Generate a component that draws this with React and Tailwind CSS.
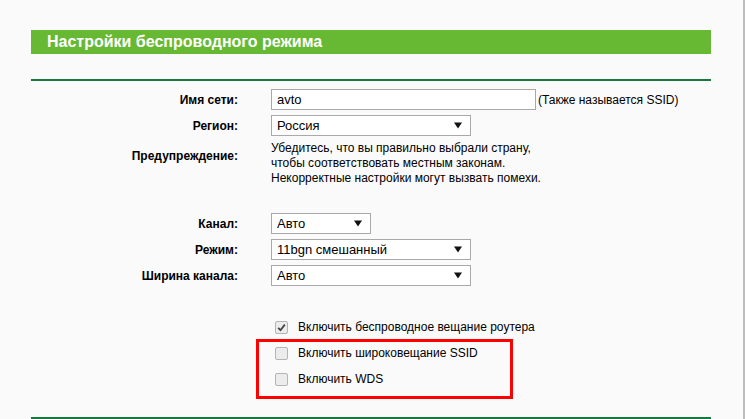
import React from 'react'

const Arrow = () => (
  <svg width="8" height="7" viewBox="0 0 8 7" className="shrink-0">
    <path d="M0 0.5 L8 0.5 L4 6.5 Z" fill="#111" />
  </svg>
)

const Select = ({ value, width }) => (
  <div className={`${width} h-[21px] border border-[#a9a9a9] bg-white flex items-center justify-between pl-[5px] pr-[8px] text-[13px] text-black`}>
    <span>{value}</span>
    <Arrow />
  </div>
)

const Checkbox = ({ checked }) => (
  <div className="w-[13px] h-[13px] rounded-[2px] border border-[#b4b4b4] bg-[#ececec] flex items-center justify-center shrink-0">
    {checked && (
      <svg width="9" height="9" viewBox="0 0 9 9">
        <path d="M1.2 4.8 L3.5 7.2 L7.8 1.6" stroke="#444" strokeWidth="1.8" fill="none" />
      </svg>
    )}
  </div>
)

const CheckRow = ({ checked, label }) => (
  <div className="h-[22px] flex items-center gap-[10px] text-[12px] text-black whitespace-nowrap">
    <Checkbox checked={checked} />
    <span>{label}</span>
  </div>
)

const Label = ({ children, className = '' }) => (
  <div className={`text-right text-[12px] font-bold text-black ${className}`}>{children}</div>
)

export default function App() {
  return (
    <div className="w-[745px] h-[419px] bg-[#fafafa] flex overflow-hidden font-['Liberation_Sans',Arial,sans-serif]">
      <div className="flex-1 pt-[30px] pl-[31px]">
        <div className="w-[680px]">
          <div className="h-[24px] bg-[#67b832] flex items-center pl-[16px] text-white text-[16px] font-bold">
            Настройки беспроводного режима
          </div>
          <div className="mt-[25px] h-[2px] bg-[#177a3c]" />

          <div className="mt-[8px] grid grid-cols-[207px_1fr] gap-x-[33px]">
            <Label className="self-center">Имя сети:</Label>
            <div className="flex items-center gap-[2px]">
              <div className="w-[265px] h-[21px] border border-[#a9a9a9] bg-white flex items-center pl-[5px] text-[13px] text-black">
                avto
              </div>
              <span className="text-[12px] text-black">(Также называется SSID)</span>
            </div>

            <Label className="self-center mt-[5px]">Регион:</Label>
            <div className="mt-[5px]">
              <Select value="Россия" width="w-[200px]" />
            </div>

            <Label className="mt-[13px] leading-[15px]">Предупреждение:</Label>
            <div className="mt-[5px] text-[12px] leading-[15px] text-black">
              Убедитесь, что вы правильно выбрали страну,
              <br />
              чтобы соответствовать местным законам.
              <br />
              Некорректные настройки могут вызвать помехи.
            </div>

            <Label className="self-center mt-[27px]">Канал:</Label>
            <div className="mt-[27px]">
              <Select value="Авто" width="w-[100px]" />
            </div>

            <Label className="self-center mt-[5px]">Режим:</Label>
            <div className="mt-[5px]">
              <Select value="11bgn смешанный" width="w-[200px]" />
            </div>

            <Label className="self-center mt-[5px]">Ширина канала:</Label>
            <div className="mt-[5px]">
              <Select value="Авто" width="w-[200px]" />
            </div>
          </div>

          <div className="mt-[30px] ml-[225px] w-[257px]">
            <div className="pl-[19px]">
              <CheckRow checked label="Включить беспроводное вещание роутера" />
            </div>
            <div className="mt-[1px] border-[3px] border-[#ff0000] pl-[16px] pb-[6px] flex flex-col gap-[4px]">
              <CheckRow label="Включить широковещание SSID" />
              <CheckRow label="Включить WDS" />
            </div>
          </div>

          <div className="mt-[18px] h-[2px] bg-[#177a3c]" />
        </div>
      </div>
      <div className="w-[2px] h-full bg-[#bdbdbd]" />
    </div>
  )
}
